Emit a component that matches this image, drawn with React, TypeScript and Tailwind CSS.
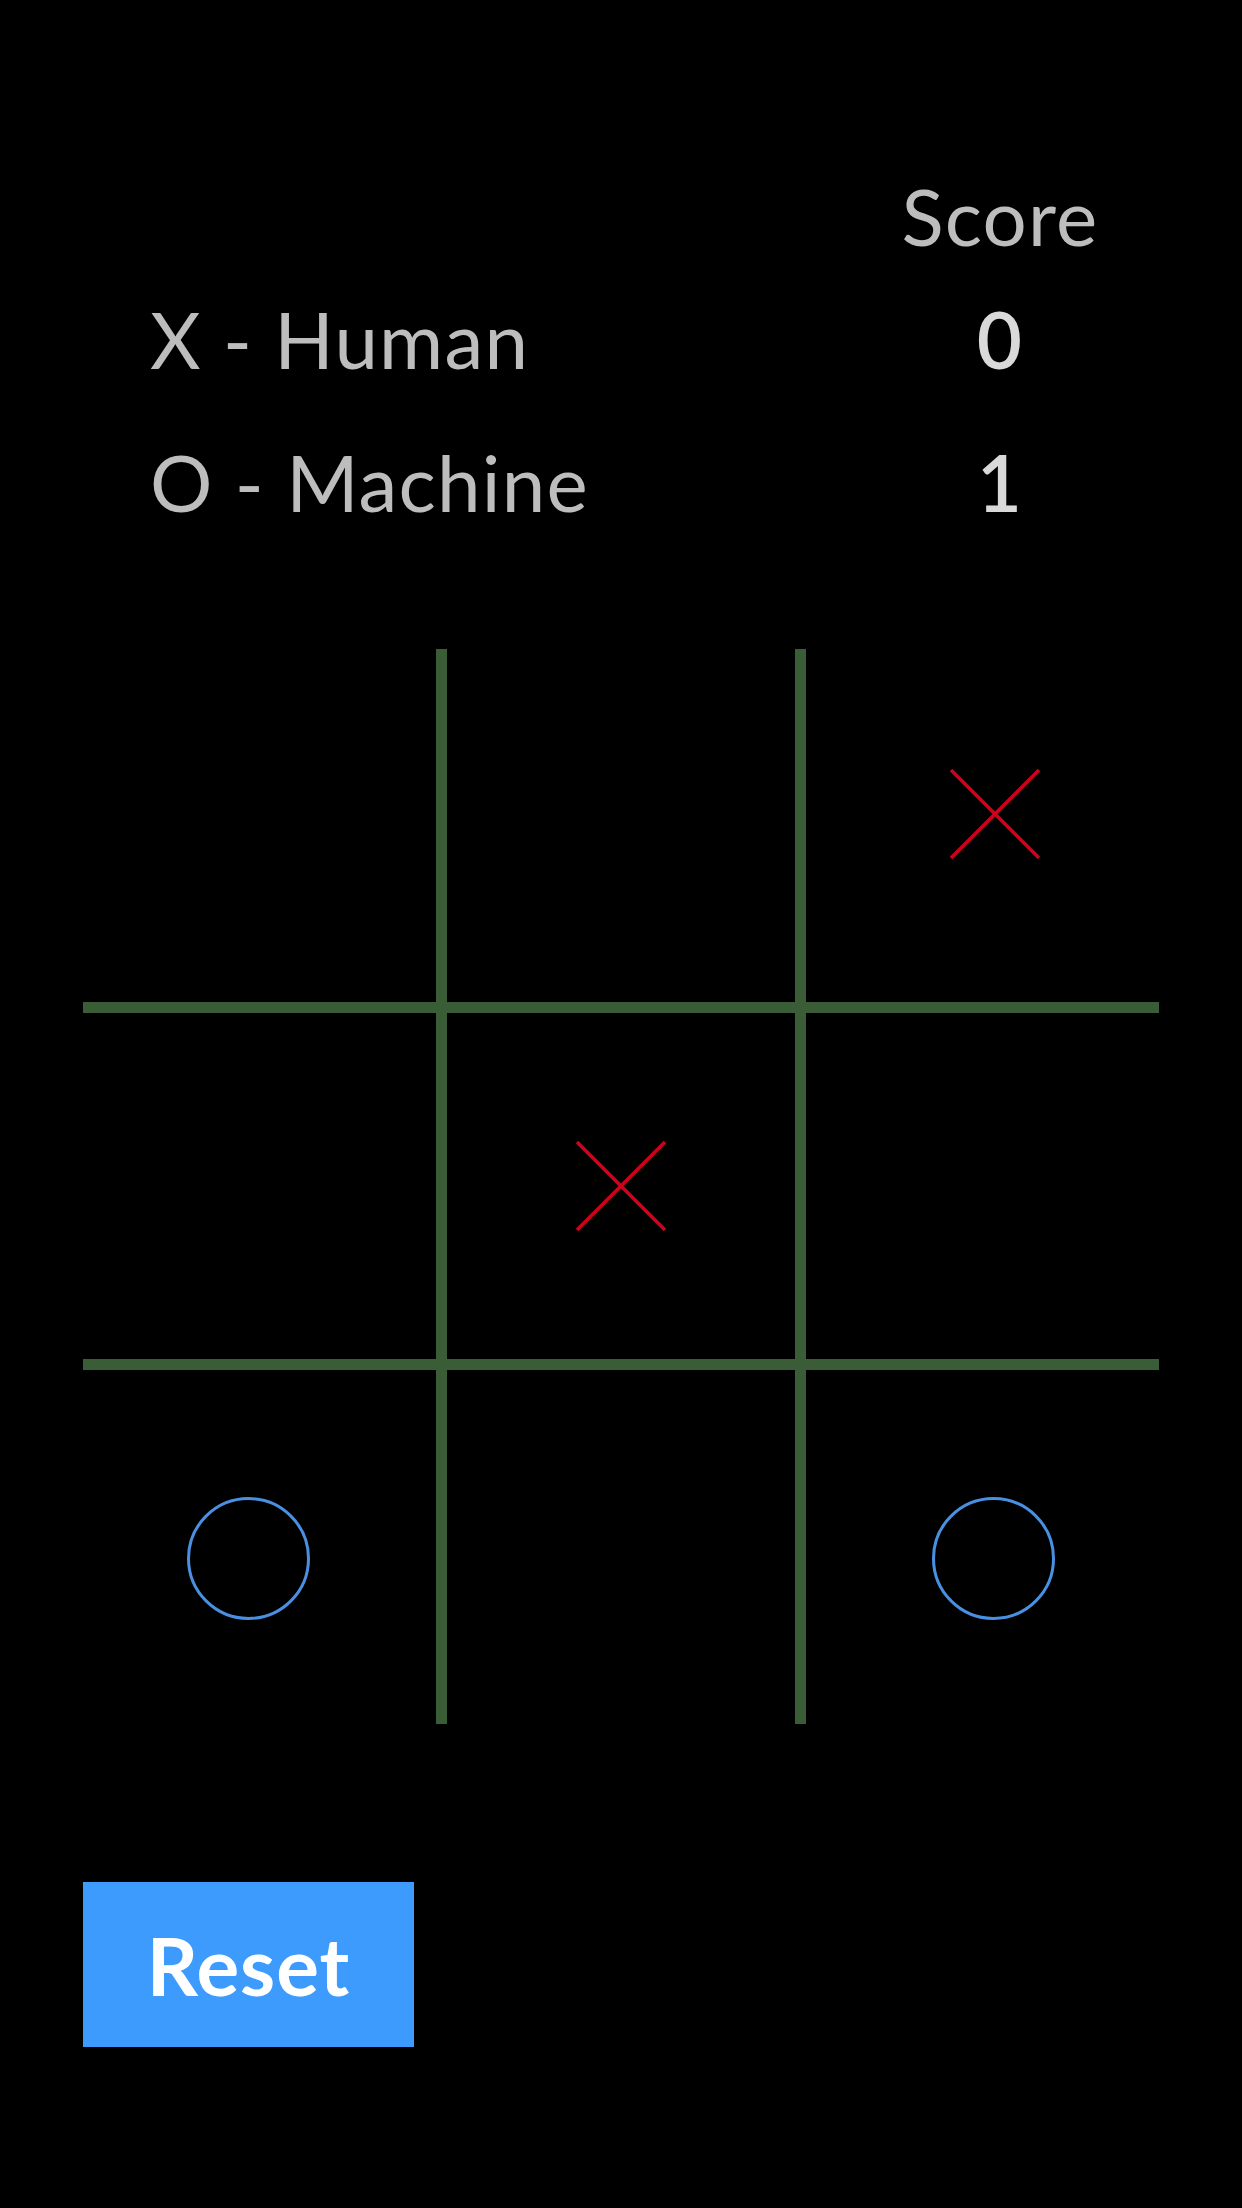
import { useState } from "react";

type Mark = "X" | "O" | "";

const START: Mark[] = ["", "", "X", "", "X", "", "O", "", "O"];

// marks sit a bit outward from the board centre
const SHIFT = [
  "-translate-x-[11px] -translate-y-[12px]",
  "-translate-y-[12px]",
  "translate-x-[12px] -translate-y-[12px]",
  "-translate-x-[11px]",
  "",
  "translate-x-[12px]",
  "-translate-x-[11px] translate-y-[11px]",
  "translate-y-[11px]",
  "translate-x-[11px] translate-y-[11px]",
];

function Cross() {
  return (
    <svg width="90" height="90" viewBox="0 0 90 90">
      <line x1="1" y1="1" x2="89" y2="89" stroke="#d0021b" strokeWidth="3.5" />
      <line x1="89" y1="1" x2="1" y2="89" stroke="#d0021b" strokeWidth="3.5" />
    </svg>
  );
}

function Nought() {
  return <div className="w-[123px] h-[123px] rounded-full border-[3.5px] border-[#4a90e2]" />;
}

export default function App() {
  const [cells, setCells] = useState<Mark[]>(START);
  const [score] = useState({ human: 0, machine: 1 });

  const play = (i: number) => {
    if (cells[i]) return;
    const next = [...cells];
    next[i] = "X";
    setCells(next);
  };

  return (
    <div
      className="w-[1242px] h-[2208px] bg-black flex flex-col"
      style={{ fontFamily: "Lato, 'Open Sans', sans-serif" }}
    >
      {/* scoreboard */}
      <div className="pt-[166px] pl-[150px] pr-[142px] text-[78px] leading-[100px] tracking-[1.2px] text-[#bdbdbd]">
        <div className="grid grid-cols-[1fr_200px]">
          <div />
          <div className="text-center">Score</div>
        </div>
        <div className="grid grid-cols-[1fr_200px] mt-[23px]">
          <div>X - Human</div>
          <div className="text-center text-[#d9d9d9] font-semibold">{score.human}</div>
        </div>
        <div className="grid grid-cols-[1fr_200px] mt-[43px]">
          <div>O - Machine</div>
          <div className="text-center text-[#d9d9d9] font-semibold">{score.machine}</div>
        </div>
      </div>

      {/* board */}
      <div className="mx-[83px] mt-[117px] h-[1075px] grid grid-cols-[353px_348px_353px] grid-rows-[353px_346px_354px] gap-[11px] bg-[#3a5d37] w-[1076px]">
        {cells.map((c, i) => (
          <button
            key={i}
            onClick={() => play(i)}
            className="bg-black flex items-center justify-center"
          >
            <div className={SHIFT[i]}>
              {c === "X" && <Cross />}
              {c === "O" && <Nought />}
            </div>
          </button>
        ))}
      </div>

      <div className="px-[83px] mt-[158px]">
        <button
          onClick={() => setCells(Array(9).fill(""))}
          className="w-[331px] h-[165px] bg-[#3d9bfd] text-white text-[80px] font-bold leading-none tracking-[1px]"
        >
          Reset
        </button>
      </div>
    </div>
  );
}
